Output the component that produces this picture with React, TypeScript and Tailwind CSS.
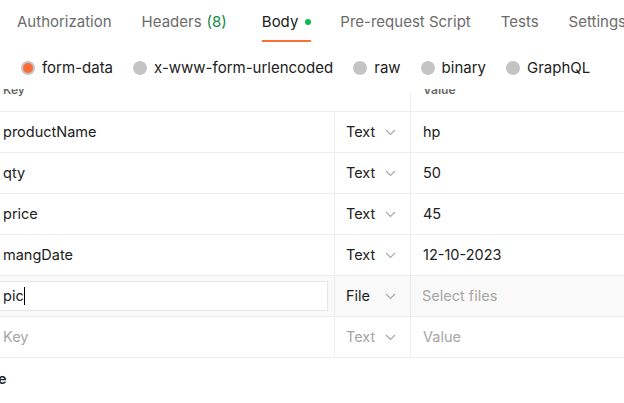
import * as React from "react";

const Chevron = () => (
    <svg width="11" height="7" viewBox="0 0 11 7" className="ml-auto mr-[14px]">
        <polyline points="1,1 5.5,5.5 10,1" fill="none" stroke="#a6a6a6" strokeWidth="1.1"/>
    </svg>
);

const tabs = [
    {label: "Authorization", ml: "ml-0"},
    {label: "Headers", ml: "ml-[30px]"},
    {label: "Body", ml: "ml-[35px]"},
    {label: "Pre-request Script", ml: "ml-[29px]"},
    {label: "Tests", ml: "ml-[30px]"},
    {label: "Settings", ml: "ml-[30px]"},
];

const radios = ["form-data", "x-www-form-urlencoded", "raw", "binary", "GraphQL"];

const rows = [
    {key: "productName", value: "hp"},
    {key: "qty", value: "50"},
    {key: "price", value: "45"},
    {key: "mangDate", value: "12-10-2023"},
];

export default function App() {
    return (
        <div className="w-[624px] h-[403px] overflow-hidden bg-white font-['Inter',sans-serif] text-[#212121]">
            {/* tabs */}
            <div className="flex h-[44px] pl-[17px] whitespace-nowrap">
                {tabs.map((t) => (
                    <div key={t.label} className={`flex flex-col ${t.ml}`}>
                        <div className={`pt-[13px] text-[15px] leading-[18px] flex items-center ${t.label === "Body" ? "text-[#212121]" : "text-[#6b6b6b]"}`}>
                            {t.label}
                            {t.label === "Headers" && <span className="ml-[5px] text-[#0f8a46]">(8)</span>}
                            {t.label === "Body" && <span className="ml-[7px] w-[6px] h-[6px] rounded-full bg-[#0cbb52]"/>}
                        </div>
                        {t.label === "Body" && <div className="mt-[9px] h-[2px] bg-[#ff6c37]"/>}
                    </div>
                ))}
            </div>

            {/* body type radios */}
            <div className="flex items-center h-[45px] pl-[21px] gap-[20px] whitespace-nowrap">
                {radios.map((r, i) => (
                    <div key={r} className="flex items-center gap-[7px] mt-[3px]">
                        {i === 0 ? (
                            <span className="w-[14px] h-[14px] rounded-full bg-[#c4c4c4] flex items-center justify-center">
                                <span className="w-[10px] h-[10px] rounded-full bg-[#ff6c37]"/>
                            </span>
                        ) : (
                            <span className="w-[14px] h-[14px] rounded-full bg-[#c4c4c4]"/>
                        )}
                        <span className="text-[15px] leading-[18px] text-[#212121]">{r}</span>
                    </div>
                ))}
            </div>

            {/* table */}
            <div className="text-[14.5px]">
                <div className="flex h-[23px] overflow-hidden border-b border-[#ededed] text-[12px] font-semibold text-[#6b6b6b]">
                    <div className="w-[334px] pl-[3px]"><div className="-mt-[7px] leading-[16px]">Key</div></div>
                    <div className="w-[76px]"/>
                    <div className="flex-1 mt-[4px] border-l border-[#ededed] pl-[12px]"><div className="-mt-[11px] leading-[16px]">Value</div></div>
                </div>

                {rows.map((r) => (
                    <div key={r.key} className="flex h-[41px] border-b border-[#ededed]">
                        <div className="w-[334px] pl-[3px] flex items-center">{r.key}</div>
                        <div className="w-[76px] border-l border-[#ededed] pl-[11px] flex items-center">
                            Text<Chevron/>
                        </div>
                        <div className="flex-1 border-l border-[#ededed] pl-[12px] flex items-center">{r.value}</div>
                    </div>
                ))}

                <div className="flex h-[41px] border-b border-[#ededed] bg-[#f9f9f9]">
                    <div className="w-[334px] flex items-center pr-[6px]">
                        <div className="-ml-px flex-1 h-[30px] bg-white border border-[#e6e6e6] flex items-center pl-[3px]">
                            pic<span className="w-px h-[18px] bg-black"/>
                        </div>
                    </div>
                    <div className="w-[76px] border-l border-[#ededed] pl-[11px] flex items-center">
                        File<Chevron/>
                    </div>
                    <div className="flex-1 border-l border-[#ededed] pl-[11px] flex items-center text-[#a6a6a6]">Select files</div>
                </div>

                <div className="flex h-[41px] border-b border-[#ededed] text-[#a6a6a6]">
                    <div className="w-[334px] pl-[3px] flex items-center">Key</div>
                    <div className="w-[76px] border-l border-[#ededed] pl-[11px] flex items-center">
                        Text<Chevron/>
                    </div>
                    <div className="flex-1 border-l border-[#ededed] pl-[12px] flex items-center">Value</div>
                </div>
            </div>

            <div className="mt-[12px] -ml-[2px] text-[14.5px] leading-[18px] font-semibold text-[#212121]">e</div>
        </div>
    );
}
